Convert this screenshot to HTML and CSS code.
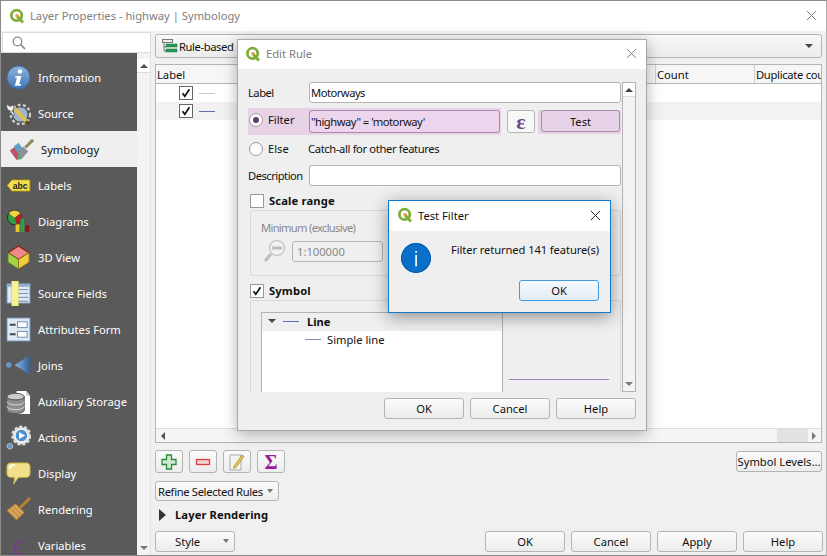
FILE: index.html
```html
<!DOCTYPE html>
<html lang="en">
<head>
<meta charset="utf-8">
<title>Layer Properties - highway | Symbology</title>
<link rel="stylesheet" href="styles.css">
</head>
<body>
<svg class="defs" width="0" height="0">
  <symbol id="qgis" viewBox="0 0 16 16">
    <circle cx="7.6" cy="7.4" r="5.2" fill="none" stroke="#7fae3a" stroke-width="2.8"/>
    <path d="M8 8l6 6.5" stroke="#7fae3a" stroke-width="3" fill="none"/>
    <circle cx="8" cy="7.4" r="1.7" fill="#ee9a4d"/>
  </symbol>
  <symbol id="x" viewBox="0 0 12 12">
    <path d="M1 1l10 10M11 1L1 11" fill="none" stroke="currentColor" stroke-width="1"/>
  </symbol>
  <symbol id="check" viewBox="0 0 14 14">
    <path d="M3 7.2l2.6 3.6L11 2.6" fill="none" stroke="#111" stroke-width="2"/>
  </symbol>
</svg>

<div class="window">
  <header class="titlebar">
    <svg class="logo"><use href="#qgis"/></svg>
    <span class="title-text">Layer Properties - highway | Symbology</span>
    <svg class="close muted main-close"><use href="#x"/></svg>
  </header>
  <div class="body">
    <aside class="side">
      <div class="search">
        <svg width="14" height="14" viewBox="0 0 14 14"><circle cx="5.5" cy="5.5" r="4.3" fill="none" stroke="#888" stroke-width="1.3"/><path d="M8.7 8.7l4.3 4.3" stroke="#888" stroke-width="1.7"/></svg>
      </div>
      <div class="side-wrap">
        <nav class="nav">
          <div class="nav-item"><svg class="ico" viewBox="0 0 26 26"><defs><linearGradient id="ig" x1="0" y1="0" x2="0" y2="1"><stop offset="0" stop-color="#8fb4dc"/><stop offset="1" stop-color="#3f75b5"/></linearGradient></defs><circle cx="13" cy="13" r="12" fill="url(#ig)" stroke="#3a6aa5"/><circle cx="14.5" cy="6.8" r="2.3" fill="#fff"/><path d="M10 11.5h6l-2.2 8.2h2l-.6 1.8h-6l2.2-8.200h-2z" fill="#fff"/></svg><span>Information</span></div>
          <div class="nav-item"><svg class="ico" viewBox="0 0 26 26"><circle cx="15" cy="14" r="8" fill="#9fb6cc" stroke="#444" stroke-width="1"/><circle cx="15" cy="14" r="10" fill="none" stroke="#ccc" stroke-width="2.500" stroke-dasharray="3 2.500"/><path d="M9 8l12 13" stroke="#e3c14f" stroke-width="4"/><path d="M21 21l3 3" stroke="#5a4a20" stroke-width="3"/><path d="M1 3c2 3 5 3 6 1 2 3 1 6-1 6l3 4-2 1-3-5C2 10 0 7 1 3z" fill="#eee" stroke="#333" stroke-width=".5"/></svg><span>Source</span></div>
          <div class="nav-item active"><svg class="ico" viewBox="0 0 26 26"><path d="M1 14l9-7 7 9-4 7-5 1z" fill="#5ea36b"/><path d="M1 14l5-3 4 6-2 7z" fill="#c34f6c"/><path d="M5 10l5-4 4 6-5 4z" fill="#5aa0c8"/><path d="M9 16l6-6 5 5-7 8z" fill="#8d9096"/><path d="M17 11l8-8" stroke="#8a8a5a" stroke-width="3"/></svg><span>Symbology</span></div>
          <div class="nav-item"><svg class="ico" viewBox="0 0 26 26"><path d="M1 13l5-6h19v12H6z" fill="#f0de4f" stroke="#8a7410"/><text x="7" y="17" class="abc">abc</text></svg><span>Labels</span></div>
          <div class="nav-item"><svg class="ico" viewBox="0 0 26 26"><circle cx="9" cy="9" r="7.500" fill="#2f9e44" stroke="#222" stroke-width="1"/><path d="M9 9L3 4.500A7.500 7.500 0 0 1 15 4.500z" fill="#f2d33b"/><path d="M9 9l6-4.500A7.500 7.500 0 0 1 11 16.200z" fill="#b52020"/><rect x="10" y="16" width="4" height="8" fill="#e8c62c"/><rect x="15" y="10" width="4" height="14" fill="#2f9e44"/><rect x="20" y="17" width="4" height="7" fill="#8c1515"/></svg><span>Diagrams</span></div>
          <div class="nav-item"><svg class="ico" viewBox="0 0 26 26"><path d="M13 1l11 7-11 7L2 8z" fill="#f08a8a" stroke="#8c1a1a" stroke-width="1.200"/><path d="M2 8l11 7v10L2 18z" fill="#9fd544" stroke="#5d7a1f" stroke-width="1"/><path d="M24 8l-11 7v10l11-7z" fill="#f2cd3c" stroke="#8e7716" stroke-width="1"/></svg><span>3D View</span></div>
          <div class="nav-item"><svg class="ico" viewBox="0 0 26 26"><rect x="1" y="3" width="24" height="20" fill="#dfe8f3" stroke="#6d8db5"/><rect x="1" y="3" width="24" height="3" fill="#8fadd0"/><path d="M11 9h12M11 13h12M11 17h12M11 21h12" stroke="#6d8db5"/><rect x="6" y="0" width="7" height="26" fill="#f7f19a" stroke="#d6ce5e" stroke-width=".6"/></svg><span>Source Fields</span></div>
          <div class="nav-item"><svg class="ico" viewBox="0 0 26 26"><rect x="1" y="1" width="24" height="24" fill="#dfe8f3" stroke="#6d8db5"/><rect x="12" y="5" width="10" height="6" fill="#fff" stroke="#6d8db5"/><rect x="12" y="15" width="10" height="6" fill="#fff" stroke="#6d8db5"/><path d="M4 8h6M4 18h6" stroke="#445" stroke-width="2"/></svg><span>Attributes Form</span></div>
          <div class="nav-item"><svg class="ico" viewBox="0 0 26 26"><defs><linearGradient id="jg" x1="0" y1="0" x2="1" y2="0"><stop offset="0" stop-color="#8fb4dc"/><stop offset="1" stop-color="#2f609c"/></linearGradient></defs><path d="M25 2v21L9 12.500z" fill="url(#jg)"/><circle cx="3" cy="12.500" r="2.800" fill="#6d97c8"/></svg><span>Joins</span></div>
          <div class="nav-item"><svg class="ico" viewBox="0 0 26 26"><path d="M11 2h10l4 5v19H11z" fill="#fff"/><path d="M21 2v5h4" fill="#ccc"/><ellipse cx="10" cy="8" rx="9" ry="3.500" fill="#ccc" stroke="#555"/><path d="M1 8v14c0 2 4 3.500 9 3.500s9-1.500 9-3.500V8c0 2-4 3.500-9 3.500S1 10 1 8z" fill="#8d8d8d" stroke="#555"/><path d="M1 13c0 2 4 3.500 9 3.500s9-1.500 9-3.500M1 18c0 2 4 3.500 9 3.500s9-1.500 9-3.500" fill="none" stroke="#ddd"/></svg><span>Auxiliary Storage</span></div>
          <div class="nav-item"><svg class="ico" viewBox="0 0 26 26"><circle cx="16" cy="11" r="9" fill="#e8e8e8" stroke="#ddd" stroke-width="3" stroke-dasharray="3 2"/><circle cx="16" cy="11" r="6.500" fill="#4f8fce" stroke="#fff"/><path d="M13.500 7.500l6.500 3.500-6.500 3.500z" fill="#fff"/><circle cx="4" cy="22" r="3" fill="#6d97c8" stroke="#ddd" stroke-dasharray="1.500 1"/></svg><span>Actions</span></div>
          <div class="nav-item"><svg class="ico" viewBox="0 0 26 26"><path d="M5 2h16c3 0 4 2 4 4v7c0 3-2 4-4 4H13l-5 7 1-7H5c-3 0-4-2-4-4V6c0-2 1-4 4-4z" fill="#f2e08a" stroke="#c9b34a"/><path d="M4 8c0-3 2-4 5-4" stroke="#fff" stroke-width="2" fill="none"/></svg><span>Display</span></div>
          <div class="nav-item"><svg class="ico" viewBox="0 0 26 26"><path d="M15 11L25 1" stroke="#b9822e" stroke-width="3"/><path d="M10 7l9 9-8 8-10-10z" fill="#d7a25a" stroke="#a8752d" stroke-width=".8"/><path d="M5 12l8 8M8 10l8 8" stroke="#a8752d" stroke-width=".8"/></svg><span>Rendering</span></div>
          <div class="nav-item"><span class="eps eps-big">ε</span><span>Variables</span></div>
        </nav>
        <div class="nav-scroll">
          <div class="arrow-box"><span class="tri-up"></span></div>
          <div class="arrow-box end"><span class="tri-down"></span></div>
        </div>
      </div>
    </aside>

    <main class="main">
      <div class="combo">
        <svg width="16" height="14" viewBox="0 0 16 14"><rect x=".5" y=".5" width="10" height="3" fill="#eee" stroke="#777"/><path d="M2 4v8h2M2 8h2" fill="none" stroke="#777"/><rect x="4" y="5" width="11" height="3" fill="#1f9d55" stroke="#157a40" stroke-width=".5"/><rect x="4" y="10" width="11" height="3" fill="#1f9d55" stroke="#157a40" stroke-width=".5"/></svg>
        <span class="combo-text">Rule-based</span>
        <span class="tri-down dark"></span>
      </div>
      <div class="tree">
        <div class="tree-head">
          <span class="th th-label">Label</span>
          <span class="th th-count">Count</span>
          <span class="th th-dup">Duplicate cou</span>
        </div>
        <div class="tree-rows">
          <div class="tree-row"><span class="cb small"><svg><use href="#check"/></svg></span><span class="sym grey"></span></div>
          <div class="tree-row alt"><span class="cb small"><svg><use href="#check"/></svg></span><span class="sym blue"></span></div>
        </div>
        <div class="hscroll">
          <span class="tri-left"></span>
          <span class="hs-thumb"></span>
          <span class="tri-right"></span>
        </div>
      </div>
      <div class="tool-row">
        <div class="tool-left">
          <button class="tool"><svg width="16" height="16" viewBox="0 0 16 16"><path d="M5.500 1h5v4.500H15v5h-4.500V15h-5v-4.500H1v-5h4.500z" fill="#cfe8cf" stroke="#2a8a3e" stroke-width="1.300"/></svg></button>
          <button class="tool"><svg width="16" height="16" viewBox="0 0 16 16"><rect x="1.500" y="5.500" width="13" height="5" fill="#f7d0d0" stroke="#e04040" stroke-width="1.300"/></svg></button>
          <button class="tool"><svg width="16" height="18" viewBox="0 0 16 18"><rect x="1" y="2" width="11" height="15" fill="#f5f5ee" stroke="#aaa"/><path d="M5 13l8-11 2 1.500-8 11-2.500 1z" fill="#e8c84a" stroke="#8a7a2a" stroke-width=".6"/></svg></button>
          <button class="tool"><span class="sigma">Σ</span></button>
        </div>
        <button class="btn sym-levels">Symbol Levels...</button>
      </div>
      <div class="refine"><span>Refine Selected Rules</span><span class="tri-down"></span></div>
      <div class="collapse"><span class="tri-right-big"></span><b>Layer Rendering</b></div>
      <div class="footer">
        <div class="style-btn"><span>Style</span><span class="tri-down"></span></div>
        <div class="footer-btns">
          <button class="btn wide">OK</button>
          <button class="btn wide">Cancel</button>
          <button class="btn wide">Apply</button>
          <button class="btn wide">Help</button>
        </div>
      </div>
    </main>
  </div>

  <section class="dialog edit">
    <header class="dlg-title">
      <svg class="logo"><use href="#qgis"/></svg>
      <span class="title-text">Edit Rule</span>
      <svg class="close muted"><use href="#x"/></svg>
    </header>
    <div class="edit-body">
      <div class="form">
        <div class="row r-label"><span class="lbl">Label</span><div class="input">Motorways</div></div>
        <div class="row r-filter">
          <div class="hl">
            <span class="radio on"></span><span class="rlbl lift">Filter</span>
            <div class="input pink">"highway" = 'motorway'</div>
          </div>
          <button class="btn eps-btn"><span class="eps">ε</span></button>
          <div class="test-wrap"><button class="btn test">Test</button></div>
        </div>
        <div class="row r-else"><span class="radio"></span><span class="rlbl">Else</span><span class="catch">Catch-all for other features</span></div>
        <div class="row r-desc"><span class="lbl">Description</span><div class="input"></div></div>
        <div class="check-row r-scale"><span class="cb"></span><b>Scale range</b></div>
        <div class="group g-scale">
          <div class="g-cap">Minimum (exclusive)</div>
          <div class="g-line">
            <svg width="24" height="24" viewBox="0 0 24 24"><circle cx="14" cy="9" r="7.500" fill="#f2f2f2" stroke="#c8c8c8" stroke-width="1.500"/><rect x="9" y="7.500" width="10" height="3" fill="#bbb"/><path d="M8 15l-6 7" stroke="#bbb" stroke-width="3"/></svg>
            <div class="spin">1:100000</div>
          </div>
        </div>
        <div class="check-row r-sym"><span class="cb"><svg><use href="#check"/></svg></span><b>Symbol</b></div>
        <div class="group g-sym">
          <div class="sym-tree">
            <div class="st-head"><span class="tri-down dark"></span><span class="sym blue"></span><b>Line</b></div>
            <div class="st-row"><span class="sym purple"></span><span>Simple line</span></div>
          </div>
          <div class="preview"><span class="sym purple long"></span></div>
        </div>
      </div>
      <div class="vscroll">
        <div class="arrow-box"><span class="tri-up dark"></span></div>
        <div class="arrow-box end"><span class="tri-down"></span></div>
      </div>
    </div>
    <div class="dlg-btns">
      <button class="btn wide">OK</button>
      <button class="btn wide">Cancel</button>
      <button class="btn wide">Help</button>
    </div>
  </section>

  <section class="dialog test-dlg">
    <header class="dlg-title small">
      <svg class="logo"><use href="#qgis"/></svg>
      <span class="title-text dark-text">Test Filter</span>
      <svg class="close"><use href="#x"/></svg>
    </header>
    <div class="msg">
      <svg class="info" width="30" height="30" viewBox="0 0 30 30"><circle cx="15" cy="15" r="15" fill="#0a6fc9"/><circle cx="15" cy="15" r="14.500" fill="none" stroke="#0a5aa5"/><rect x="14.300" y="12" width="1.600" height="11.500" fill="#fff"/><rect x="14.300" y="8" width="1.600" height="1.800" fill="#fff"/></svg>
      <span class="msg-text">Filter returned 141 feature(s)</span>
    </div>
    <div class="msg-btns"><button class="btn wide default">OK</button></div>
  </section>
</div>
</body>
</html>
```
FILE: styles.css
```css
* { box-sizing: border-box; }
html, body { margin: 0; padding: 0; }
body { width: 827px; height: 556px; overflow: hidden; font-family: "Noto Sans", "Liberation Sans", sans-serif; font-size: 11.2px; color: #111; background: #fff; }
.defs { position: absolute; }
button { font: inherit; color: inherit; padding: 0; }

.window { position: relative; width: 827px; height: 556px; display: flex; flex-direction: column; background: #f0f0f0; border: 1px solid #8a8a8a; border-right-color: #b0b0b0; overflow: hidden; }
.titlebar { height: 30px; flex: none; background: #fff; display: flex; align-items: center; padding: 0 0 1px 8px; }
.logo { width: 16px; height: 16px; flex: none; margin-right: 5px; }
.title-text { color: #7d7d7d; }
.dark-text { color: #111; }
.close { width: 11px; height: 11px; flex: none; margin-left: auto; margin-right: 9px; color: #111; }
.close.muted { color: #7a7a7a; }
.main-close { margin-bottom: 1px; }

.body { flex: 1; display: flex; min-height: 0; }
.side { width: 150px; flex: none; display: flex; flex-direction: column; }
.search { height: 21px; margin: 1px 0 0 1px; background: #fff; border: 1px solid #dcdcdc; padding: 3px 0 0 9px; flex: none; }
.search svg { display: block; }
.side-wrap { flex: 1; display: flex; min-height: 0; }
.nav { width: 136px; flex: none; background: #5a5a5a; padding-top: 6px; overflow: hidden; }
.nav-item { height: 36px; display: flex; align-items: center; padding-left: 5px; color: #fff; }
.nav-item .ico { width: 25px; height: 25px; flex: none; margin-right: 7px; }
.nav-item.active { background: #eeeeee; color: #111; padding-left: 8px; }
.abc { font: bold 9px "Liberation Sans", sans-serif; fill: #222; }
.nav-scroll { width: 14px; flex: none; background: #f3f3f3; display: flex; flex-direction: column; justify-content: space-between; border-right: 1px solid #e2e2e2; }
.arrow-box { height: 14px; background: #fff; display: flex; align-items: center; justify-content: center; border-bottom: 1px solid #dcdcdc; margin-top: 6px; }
.arrow-box.end { background: transparent; border: 0; margin-top: 0; }

.tri-up, .tri-down { width: 0; height: 0; border-left: 4px solid transparent; border-right: 4px solid transparent; display: inline-block; }
.tri-up { border-bottom: 4px solid #555; }
.tri-down { border-top: 4px solid #777; }
.tri-down.dark { border-top-color: #444; }
.tri-up.dark { border-bottom-color: #444; }
.tri-left { width: 0; height: 0; border-top: 4px solid transparent; border-bottom: 4px solid transparent; border-right: 4px solid #555; margin-left: 5px; }
.tri-right { width: 0; height: 0; border-top: 4px solid transparent; border-bottom: 4px solid transparent; border-left: 4px solid #777; margin: 0 5px 0 4px; }
.tri-right-big { width: 0; height: 0; border-top: 6px solid transparent; border-bottom: 6px solid transparent; border-left: 7px solid #333; margin-right: 9px; }

.main { flex: 1; min-width: 0; padding: 3px 4px 0 4px; display: flex; flex-direction: column; }
.combo { height: 24px; flex: none; border: 1px solid #b4b4b4; border-radius: 3px; background: linear-gradient(#f8f8f8, #ececec); display: flex; align-items: center; padding: 0 8px 0 6px; }
.combo-text { margin-left: 1px; letter-spacing: -.4px; }
.combo .tri-down { margin-left: auto; }
.tree { height: 379px; flex: none; margin-top: 6px; border: 1px solid #b4b4b4; background: #fff; display: flex; flex-direction: column; }
.tree-head { height: 19px; flex: none; display: flex; background: #f6f6f6; border-bottom: 1px solid #b4b4b4; }
.th { display: flex; align-items: center; padding-left: 1px; white-space: nowrap; overflow: hidden; }
.th-label { flex: 1; }
.th-count { width: 99px; border-left: 1px solid #cfcfcf; }
.th-dup { width: 67px; border-left: 1px solid #cfcfcf; letter-spacing: -.3px; }
.tree-rows { flex: 1; }
.tree-row { height: 18px; display: flex; align-items: center; padding-left: 23px; }
.tree-row.alt { background: #f2f2f2; }
.hscroll { height: 14px; flex: none; border-top: 1px solid #dcdcdc; background: #f5f5f5; display: flex; align-items: center; justify-content: space-between; }
.hs-thumb { width: 31px; height: 13px; background: #e2e2e2; margin-left: auto; }

.cb { width: 14px; height: 14px; flex: none; background: #fff; border: 1px solid #9a9a9a; display: inline-block; }
.cb.small { border-color: #666; }
.cb svg { display: block; width: 100%; height: 100%; }
.sym { display: inline-block; width: 16px; height: 1px; flex: none; }
.tree-row .sym { margin-left: 6px; }
.sym.grey { background: #c8c8c8; }
.sym.blue { background: #5a6fb0; }
.sym.purple { background: #9b7fc0; }
.sym.long { width: 100px; }

.tool-row { height: 23px; flex: none; margin-top: 7px; display: flex; align-items: center; justify-content: space-between; }
.tool-left { display: flex; gap: 6px; }
.tool { width: 28px; height: 23px; background: linear-gradient(#fbfbfb, #ececec); border: 1px solid #b4b4b4; border-radius: 3px; display: flex; align-items: center; justify-content: center; }
.sigma { color: #9a1c9a; font: bold 20px "Liberation Serif", serif; line-height: 1; }
.btn { background: linear-gradient(#fbfbfb, #ececec); border: 1px solid #b4b4b4; border-radius: 3px; display: flex; align-items: center; justify-content: center; }
.sym-levels { width: 86px; height: 21px; white-space: nowrap; }
.refine { width: 124px; height: 20px; flex: none; margin-top: 8px; background: linear-gradient(#fbfbfb, #ececec); border: 1px solid #b4b4b4; border-radius: 3px; display: flex; align-items: center; justify-content: space-between; padding: 0 5px 0 2px; white-space: nowrap; letter-spacing: -.33px; }
.refine .tri-down, .style-btn .tri-down { border-left-width: 3.500px; border-right-width: 3.500px; }
.collapse { height: 17px; flex: none; margin-top: 5px; display: flex; align-items: center; padding-left: 4px; letter-spacing: .1px; }
.footer { flex: none; margin-top: 8px; height: 21px; display: flex; justify-content: space-between; }
.style-btn { width: 80px; height: 21px; background: linear-gradient(#fbfbfb, #ececec); border: 1px solid #b4b4b4; border-radius: 3px; display: flex; align-items: center; justify-content: space-between; padding: 0 5px 1px 19px; }
.footer-btns { display: flex; gap: 6px; margin-right: -1px; }
.footer .btn { padding-bottom: 1px; }
.wide { width: 80px; height: 21px; }

.dialog { position: absolute; display: flex; flex-direction: column; background: #efefef; box-shadow: 0 3px 14px rgba(0,0,0,.3); }
.edit { left: 236px; top: 38px; width: 410px; height: 392px; border: 1px solid #a8a8a8; }
.dlg-title { height: 29px; flex: none; background: #fff; display: flex; align-items: center; padding: 0 0 2px 7px; }
.edit-body { height: 323px; flex: none; padding: 13px 10px 0 10px; display: flex; gap: 1px; }
.form { width: 373px; height: 310px; overflow: hidden; display: flex; flex-direction: column; }
.row { display: flex; align-items: center; flex: none; }
.lbl { width: 61px; flex: none; white-space: nowrap; letter-spacing: -.5px; }
.input { height: 21px; flex: 1; background: #fff; border: 1px solid #b4b4b4; border-radius: 3px; padding: 0 1px; display: flex; align-items: center; white-space: nowrap; letter-spacing: -.5px; }
.r-label { height: 21px; }
.r-filter { height: 27px; margin-top: 5px; }
.hl { width: 253px; height: 27px; flex: none; background: #e8d2e6; display: flex; align-items: center; padding-left: 1px; }
.input.pink { background: #edd5ed; border-color: #a98aa8; height: 23px; flex: none; width: 191px; }
.radio { width: 14px; height: 14px; flex: none; border-radius: 50%; background: #fff; border: 1px solid #9a9a9a; margin-right: 5px; display: inline-flex; align-items: center; justify-content: center; }
.r-filter .radio { margin-top: -3px; }
.radio.on::after { content: ""; width: 6px; height: 6px; border-radius: 50%; background: #5a3f6a; }
.rlbl { width: 41px; flex: none; margin-top: -1px; }
.rlbl.lift { margin-top: -4px; }
.eps-btn { width: 28px; height: 23px; margin-left: 6px; background: #f8f8f8; }
.eps { font: bold 22px "Liberation Serif", serif; color: #6f4a80; line-height: 20px; }
.eps-big { width: 25px; font-size: 30px; text-align: center; margin-right: 7px; font-weight: normal; color: #6f3f8a; }
.test-wrap { width: 83px; height: 24px; flex: none; margin: 1px 0 0 3px; background: #e8d2e6; padding: 0 1px 1px 3px; }
.test { width: 79px; height: 22px; background: #e7d3e8; border-color: #a98aa8; }
.r-else { height: 20px; margin-top: 4px; padding-left: 1px; }
.catch { margin: -1px 0 0 -1px; white-space: nowrap; letter-spacing: -.36px; }
.r-desc { height: 21px; margin-top: 6px; }
.check-row { display: flex; align-items: center; flex: none; height: 15px; padding-left: 2px; gap: 5px; }
.check-row b { font-weight: 700; letter-spacing: .15px; }
.r-scale { margin-top: 7px; }
.group { border: 1px solid #d9d9d9; border-radius: 3px; flex: none; margin-left: 2px; }
.g-scale { height: 66px; margin-top: 2px; padding: 9px 0 0 10px; color: #8a8a8a; }
.g-cap { letter-spacing: -.7px; }
.g-line { display: flex; align-items: center; margin-top: 4px; padding-left: 2px; gap: 5px; }
.spin { width: 91px; height: 21px; border: 1px solid #b4b4b4; border-radius: 3px; padding-left: 4px; display: flex; align-items: center; }
.r-sym { margin-top: 7px; }
.g-sym { height: 100px; margin-top: 2px; padding: 11px 0 0 10px; display: flex; }
.sym-tree { width: 242px; height: 90px; flex: none; background: #fff; border: 1px solid #b4b4b4; border-bottom: 0; }
.st-head { height: 18px; background: #efefef; display: flex; align-items: center; padding: 0 0 2px 6px; }
.st-head .sym { margin: 0 8px 0 7px; }
.st-row { height: 18px; display: flex; align-items: center; padding: 0 0 2px 43px; gap: 6px; }
.preview { flex: 1; display: flex; align-items: flex-start; padding: 67px 0 0 6px; }
.vscroll { width: 14px; height: 310px; flex: none; border: 1px solid #b4b4b4; background: #f3f3f3; display: flex; flex-direction: column; justify-content: space-between; }
.vscroll .arrow-box { margin-top: 0; }
.dlg-btns { flex: 1; display: flex; justify-content: flex-end; gap: 6px; padding: 6px 10px 0 0; }

.test-dlg { left: 387px; top: 199px; width: 223px; height: 113px; border: 1px solid #0f7bd0; box-shadow: 0 4px 16px rgba(0,0,0,.4); }
.dlg-title.small { height: 30px; padding-left: 8px; }
.dlg-title.small .close { margin-right: 9px; }
.msg { flex: none; height: 49px; display: flex; padding: 12px 0 0 12px; }
.info { flex: none; }
.msg-text { margin-left: 20px; margin-top: -1px; white-space: nowrap; letter-spacing: -.1px; }
.msg-btns { display: flex; justify-content: flex-end; padding-right: 11px; }
.default { border-color: #3f9ae0; background: linear-gradient(#f5f9fc, #e4edf4); }
```
